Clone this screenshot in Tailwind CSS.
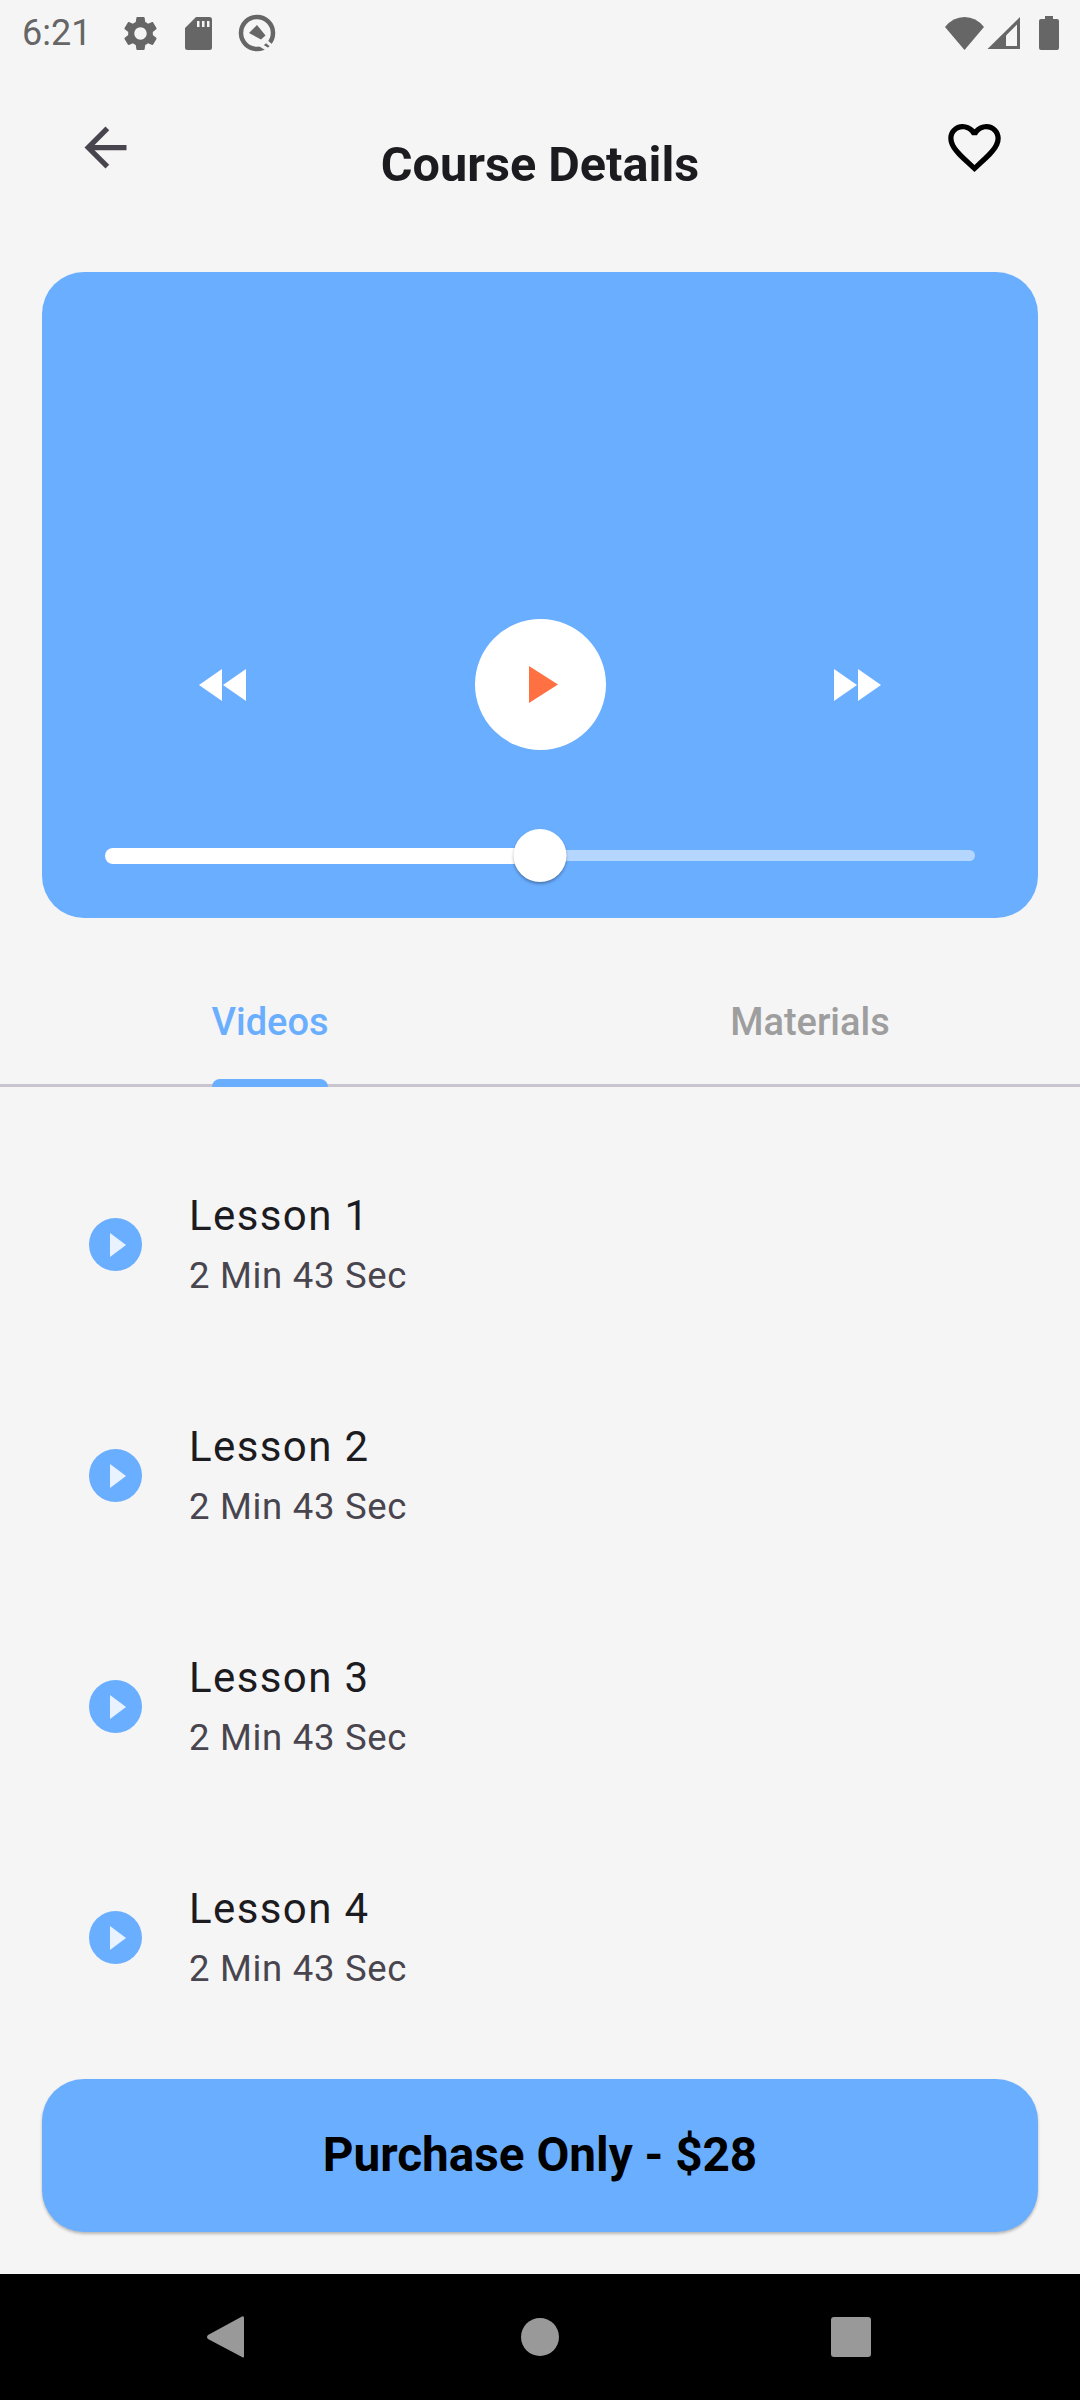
<!DOCTYPE html>
<html>
<head>
<meta charset="utf-8">
<script src="https://cdn.jsdelivr.net/npm/@tailwindcss/browser@4"></script>
</head>
<body>
<div class="w-[1080px] h-[2400px] flex flex-col bg-[#f5f5f5] font-['Roboto',sans-serif] overflow-hidden">
  <!-- status bar -->
  <div class="h-[66px] flex items-center pl-[22px] pr-[21px] text-[#666666]">
    <span class="text-[36px] leading-[36px] w-[67px] font-normal">6:21</span>
    <svg class="ml-[35px] w-[33px] h-[33px]" viewBox="2.4 2.4 19.2 19.2" fill="#666666"><path d="M19.14 12.94c.04-.3.06-.61.06-.94 0-.32-.02-.64-.07-.94l2.03-1.58c.18-.14.23-.41.12-.61l-1.92-3.32c-.12-.22-.37-.29-.59-.22l-2.39.96c-.5-.38-1.03-.7-1.62-.94l-.36-2.54c-.04-.24-.24-.41-.48-.41h-3.84c-.24 0-.43.17-.47.41l-.36 2.54c-.59.24-1.13.57-1.62.94l-2.39-.96c-.22-.08-.47 0-.59.22L2.74 8.87c-.12.21-.08.47.12.61l2.03 1.58c-.05.3-.09.63-.09.94s.02.64.07.94l-2.03 1.58c-.18.14-.23.41-.12.61l1.92 3.32c.12.22.37.29.59.22l2.39-.96c.5.38 1.03.7 1.62.94l.36 2.54c.05.24.24.41.48.41h3.84c.24 0 .44-.17.47-.41l.36-2.54c.59-.24 1.13-.56 1.62-.94l2.39.96c.22.08.47 0 .59-.22l1.92-3.32c.12-.22.07-.47-.12-.61l-2.01-1.58zM12 15.6c-1.98 0-3.6-1.62-3.6-3.6s1.62-3.6 3.6-3.6 3.6 1.62 3.6 3.6-1.62 3.6-3.6 3.6z"/></svg>
    <svg class="ml-[28px] w-[27px] h-[33px]" viewBox="0 0 27 33" fill="#666666"><path fill-rule="evenodd" d="M11 0H24.5Q27 0 27 2.5V30.5Q27 33 24.500 33H2.500Q0 33 0 30.500V11ZM12 4V10H14.500V4ZM17 4V10H19.500V4ZM22 4V10H24.500V4Z"/></svg>
    <svg class="ml-[26px] w-[38px] h-[38px]" viewBox="0 0 38 38" fill="none"><circle cx="19" cy="19" r="16" stroke="#666666" stroke-width="4.500"/><path d="M19 11L27.500 21.500L23 25.500L11 19Z" fill="#666666"/><path d="M9 22L24 32L32 37" stroke="#f5f5f5" stroke-width="3.500"/><path d="M29 28L35 33" stroke="#f5f5f5" stroke-width="3"/></svg>
    <div class="flex-1"></div>
    <svg class="w-[39px] h-[33px]" viewBox="0 0 39 33" fill="#666666"><path d="M0 10Q8 0 19.500 0T39 10L19.500 33Z"/></svg>
    <svg class="ml-[3px] w-[33px] h-[33px]" viewBox="0 0 33 33"><path fill="#666666" d="M33 0V32H0.500Z"/><path d="M19 18.500L30 7.500V29H19Z" fill="#f5f5f5"/></svg>
    <svg class="ml-[19px] w-[20px] h-[34px]" viewBox="0 0 20 34" fill="#666666"><path d="M6 0H14V3H18Q20 3 20 5V32Q20 34 18 34H2Q0 34 0 32V5Q0 3 2 3H6Z"/></svg>
  </div>

  <!-- header -->
  <div class="h-[206px] grid grid-cols-[1fr_auto_1fr] items-start">
    <div class="flex pl-[74px] pt-[50px]">
      <svg class="w-[63px] h-[63px]" viewBox="0 0 24 24" fill="#49454f"><path d="M20 11H7.830l5.590-5.590L12 4l-8 8 8 8 1.410-1.410L7.830 13H20v-2z"/></svg>
    </div>
    <h1 class="text-[48.6px] leading-[60px] font-bold text-[#1c1b1f] pt-[69px]">Course Details</h1>
    <div class="flex justify-end pr-[74px] pt-[50px]">
      <svg class="w-[63px] h-[63px]" viewBox="0 0 24 24" fill="#000000"><path d="M16.500 3c-1.740 0-3.410.810-4.500 2.090C10.910 3.810 9.240 3 7.500 3 4.420 3 2 5.420 2 8.500c0 3.780 3.400 6.860 8.550 11.540L12 21.350l1.450-1.320C18.600 15.360 22 12.280 22 8.500 22 5.420 19.580 3 16.500 3zm-4.400 15.550l-.1.100-.1-.100C7.140 14.240 4 11.390 4 8.500 4 6.500 5.500 5 7.500 5c1.540 0 3.040.990 3.570 2.360h1.870C13.460 5.990 14.960 5 16.500 5c2 0 3.500 1.500 3.500 3.500 0 2.890-3.140 5.740-7.900 10.050z"/></svg>
    </div>
  </div>

  <!-- player card -->
  <div class="mx-[42px] h-[646px] rounded-[42px] bg-[#6aaeff] pt-[347px] flex flex-col">
    <div class="flex items-center justify-between px-[157px] h-[131px]">
      <svg class="w-[47px] h-[32px]" viewBox="0 0 47 32" fill="#ffffff"><path d="M23 0V32L0 16ZM47 0V32L24 16Z"/></svg>
      <div class="w-[131px] h-[131px] rounded-full bg-white flex items-center justify-center">
        <svg class="w-[29px] h-[37px] ml-[6px]" viewBox="0 0 29 37" fill="#ff7043"><path d="M0 0L29 18.500L0 37Z"/></svg>
      </div>
      <svg class="w-[47px] h-[32px]" viewBox="0 0 47 32" fill="#ffffff"><path d="M0 0V32L23 16ZM24 0V32L47 16Z"/></svg>
    </div>
    <div class="relative mx-[63px] mt-[79px] h-[53px] flex items-center">
      <div class="flex-1 h-[16px] bg-white rounded-l-full"></div>
      <div class="flex-1 h-[11px] bg-white/50 rounded-r-full"></div>
      <div class="absolute left-1/2 top-0 -translate-x-1/2 w-[53px] h-[53px] rounded-full bg-white shadow-[0_2px_3px_rgba(0,0,0,0.3)]"></div>
    </div>
  </div>

  <!-- tabs -->
  <div class="h-[169px] grid grid-cols-2 border-b-[3px] border-[#cac4d0] text-[38px] font-medium leading-[48px]">
    <div class="relative flex justify-center pt-[80px] text-[#6aaeff]">
      <span>Videos</span>
      <div class="absolute -bottom-[3px] left-[212px] w-[116px] h-[8px] rounded-t-[8px] bg-[#6aaeff]"></div>
    </div>
    <div class="flex justify-center pt-[80px] text-[#9e9e9e]">
      <span>Materials</span>
    </div>
  </div>

  <!-- lessons -->
  <div class="mt-[42px] flex flex-col">
    <div class="h-[231px] flex items-center pl-[89px] gap-[47px]">
      <div class="w-[53px] h-[53px] rounded-full bg-[#6aaeff] flex items-center justify-center"><svg class="w-[16px] h-[24px] ml-[5px]" viewBox="0 0 16 24" fill="#ffffff" fill-opacity="0.85"><path d="M0 0L16 12L0 24Z"/></svg></div>
      <div class="flex flex-col pt-[2px]">
        <span class="text-[42px] leading-[60px] tracking-[1.4px] text-[#1c1b1f]">Lesson 1</span>
        <span class="text-[36.5px] leading-[60px] tracking-[0.7px] text-[#49454f]">2 Min 43 Sec</span>
      </div>
    </div>
    <div class="h-[231px] flex items-center pl-[89px] gap-[47px]">
      <div class="w-[53px] h-[53px] rounded-full bg-[#6aaeff] flex items-center justify-center"><svg class="w-[16px] h-[24px] ml-[5px]" viewBox="0 0 16 24" fill="#ffffff" fill-opacity="0.85"><path d="M0 0L16 12L0 24Z"/></svg></div>
      <div class="flex flex-col pt-[2px]">
        <span class="text-[42px] leading-[60px] tracking-[1.4px] text-[#1c1b1f]">Lesson 2</span>
        <span class="text-[36.5px] leading-[60px] tracking-[0.7px] text-[#49454f]">2 Min 43 Sec</span>
      </div>
    </div>
    <div class="h-[231px] flex items-center pl-[89px] gap-[47px]">
      <div class="w-[53px] h-[53px] rounded-full bg-[#6aaeff] flex items-center justify-center"><svg class="w-[16px] h-[24px] ml-[5px]" viewBox="0 0 16 24" fill="#ffffff" fill-opacity="0.85"><path d="M0 0L16 12L0 24Z"/></svg></div>
      <div class="flex flex-col pt-[2px]">
        <span class="text-[42px] leading-[60px] tracking-[1.4px] text-[#1c1b1f]">Lesson 3</span>
        <span class="text-[36.5px] leading-[60px] tracking-[0.7px] text-[#49454f]">2 Min 43 Sec</span>
      </div>
    </div>
    <div class="h-[231px] flex items-center pl-[89px] gap-[47px]">
      <div class="w-[53px] h-[53px] rounded-full bg-[#6aaeff] flex items-center justify-center"><svg class="w-[16px] h-[24px] ml-[5px]" viewBox="0 0 16 24" fill="#ffffff" fill-opacity="0.85"><path d="M0 0L16 12L0 24Z"/></svg></div>
      <div class="flex flex-col pt-[2px]">
        <span class="text-[42px] leading-[60px] tracking-[1.4px] text-[#1c1b1f]">Lesson 4</span>
        <span class="text-[36.5px] leading-[60px] tracking-[0.7px] text-[#49454f]">2 Min 43 Sec</span>
      </div>
    </div>
  </div>

  <!-- button -->
  <div class="mx-[42px] mt-[26px] h-[153px] rounded-[42px] bg-[#6aaeff] shadow-[0_2px_3px_rgba(0,0,0,0.25)] flex items-center justify-center text-[47.7px] font-bold text-black">Purchase Only - $28</div>

  <!-- nav bar -->
  <div class="mt-[42px] h-[126px] bg-black flex items-center pl-[207px]">
    <svg class="w-[37px] h-[42px]" viewBox="0 0 37 42" fill="#999999"><path d="M35 0.500Q37 -0.500 37 2V40Q37 42.500 35 41L1 23Q-1 21 1 19Z"/></svg>
    <div class="ml-[277px] w-[38px] h-[38px] rounded-full bg-[#999999]"></div>
    <div class="ml-[272px] w-[40px] h-[40px] rounded-[3px] bg-[#999999]"></div>
  </div>
</div>
</body>
</html>
